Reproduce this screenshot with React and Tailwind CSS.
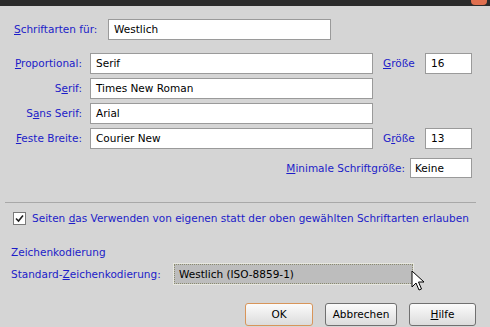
import React from "react";

const font = { fontFamily: '"DejaVu Sans", Verdana, sans-serif' };

function Field({ w, children }) {
  return (
    <div className={`h-[21px] ${w} bg-white border border-[#9a9a9a] flex items-center px-[5px] text-black shrink-0`}>
      {children}
    </div>
  );
}

function Label({ children, className = "" }) {
  return <span className={`text-[#1c1cc8] whitespace-nowrap ${className}`}>{children}</span>;
}

export default function App() {
  return (
    <div className="w-[490px] h-[327px] bg-[#d5d5d5] overflow-hidden relative flex flex-col text-[10.5px] leading-[13px]" style={font}>
      <div className="h-[6px] bg-[#2b2b2b] flex justify-end pr-[3px] shrink-0">
        <div className="w-[16px] h-[5px] bg-[#e07050] rounded-b-[4px]" />
      </div>

      <div className="flex items-center h-[21px] mt-[13px] pl-[14px] shrink-0">
        <Label className="w-[94px]"><u>S</u>chriftarten für:</Label>
        <Field w="w-[223px]">Westlich</Field>
      </div>

      <div className="flex flex-col gap-[4px] mt-[13px] shrink-0">
        <div className="flex items-center h-[21px]">
          <div className="w-[82px] text-right shrink-0"><Label><u>P</u>roportional:</Label></div>
          <div className="w-[8px] shrink-0" />
          <Field w="w-[283px]">Serif</Field>
          <div className="w-[10px] shrink-0" />
          <Label className="w-[42px]"><u>G</u>röße</Label>
          <Field w="w-[47px]">16</Field>
        </div>
        <div className="flex items-center h-[21px]">
          <div className="w-[82px] text-right shrink-0"><Label>S<u>e</u>rif:</Label></div>
          <div className="w-[8px] shrink-0" />
          <Field w="w-[283px]">Times New Roman</Field>
        </div>
        <div className="flex items-center h-[21px]">
          <div className="w-[82px] text-right shrink-0"><Label>S<u>a</u>ns Serif:</Label></div>
          <div className="w-[8px] shrink-0" />
          <Field w="w-[283px]">Arial</Field>
        </div>
        <div className="flex items-center h-[21px]">
          <div className="w-[82px] text-right shrink-0"><Label><u>F</u>este Breite:</Label></div>
          <div className="w-[8px] shrink-0" />
          <Field w="w-[283px]">Courier New</Field>
          <div className="w-[10px] shrink-0" />
          <Label className="w-[42px]">G<u>r</u>öße</Label>
          <Field w="w-[47px]">13</Field>
        </div>
      </div>

      <div className="flex items-center justify-end h-[20px] mt-[9px] pr-[18px] shrink-0">
        <Label className="mr-[5px]"><u>M</u>inimale Schriftgröße:</Label>
        <div className="h-[20px] w-[62px] bg-white border border-[#9a9a9a] flex items-center px-[4px] text-black">Keine</div>
      </div>

      <div className="mt-[24px] ml-[5px] w-[471px] h-px bg-[#a8a8a8] shrink-0" />

      <div className="flex items-center h-[13px] mt-[9px] pl-[13px] shrink-0">
        <div className="w-[13px] h-[13px] bg-white border border-[#7a7a7a] flex items-center justify-center shrink-0">
          <svg width="9" height="9" viewBox="0 0 9 9">
            <path d="M1 4.5 L3.5 7 L8 1.5" stroke="#202020" strokeWidth="1.6" fill="none" />
          </svg>
        </div>
        <Label className="ml-[6px]">Seiten <u>d</u>as Verwenden von eigenen statt der oben gewählten Schriftarten erlauben</Label>
      </div>

      <div className="h-[13px] mt-[21px] pl-[11px] flex items-center shrink-0">
        <Label>Zeichenkodierung</Label>
      </div>

      <div className="flex items-center h-[20px] mt-[5px] pl-[11px] shrink-0">
        <Label className="w-[163px]">Standard-<u>Z</u>eichenkodierung:</Label>
        <div className="h-[20px] w-[239px] bg-[#bdbdbd] border border-dotted border-[#8a8a70] outline outline-1 outline-[#e8e8e0] flex items-center px-[4px] text-black">
          Westlich (ISO-8859-1)
        </div>
      </div>

      <div className="flex items-center h-[23px] mt-[19px] ml-[245px] gap-[12px] shrink-0">
        <div className="w-[68px] h-[23px] rounded-[3px] border border-[#d8955a] bg-gradient-to-b from-[#fbfbfb] to-[#dcdcdc] flex items-center justify-center text-black">OK</div>
        <div className="w-[72px] h-[23px] rounded-[3px] border border-[#707070] bg-gradient-to-b from-[#fbfbfb] to-[#dcdcdc] flex items-center justify-center text-black">Abbrechen</div>
        <div className="w-[67px] h-[23px] rounded-[3px] border border-[#707070] bg-gradient-to-b from-[#fbfbfb] to-[#dcdcdc] flex items-center justify-center text-black"><u>H</u>ilfe</div>
      </div>

      <svg className="absolute left-[411px] top-[270px]" width="14" height="22" viewBox="0 0 14 22">
        <path d="M1 1 L1 17 L5 13 L8 20 L10.5 19 L7.5 12 L13 12 Z" fill="white" stroke="black" strokeWidth="1" />
      </svg>
    </div>
  );
}
